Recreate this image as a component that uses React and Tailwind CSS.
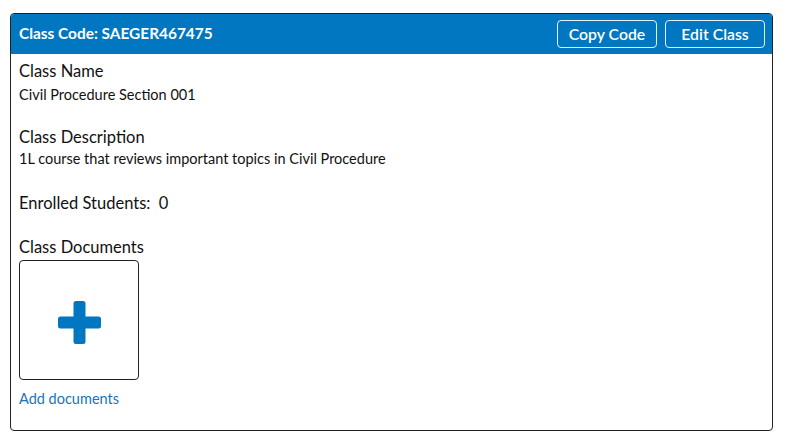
import React from "react";

const PlusIcon = () => (
  <svg width="43" height="43" viewBox="0 0 43 43" className="mt-[5px]">
    <rect x="15.5" y="0" width="12" height="43" rx="2.5" fill="#0077c0" />
    <rect x="0" y="15.5" width="43" height="12" rx="2.5" fill="#0077c0" />
  </svg>
);

const App = () => {
  return (
    <div className="w-[788px] h-[442px] bg-white pt-[13px] pl-[10px]" style={{ fontFamily: "Lato, 'Open Sans', sans-serif" }}>
      <div className="w-[763px] h-[418px] border border-[#222] rounded-[4px] overflow-hidden flex flex-col">
        <div className="h-[40px] bg-[#0077c0] flex items-center justify-between pl-[8px] pr-[7px]">
          <span className="text-white font-bold text-[15.4px]">Class Code: SAEGER467475</span>
          <div className="flex gap-[8px]">
            <button className="w-[100px] h-[28px] border border-[#e6f0f8] rounded-[4px] text-white font-semibold text-[15.8px]">
              Copy Code
            </button>
            <button className="w-[100px] h-[28px] border border-[#e6f0f8] rounded-[4px] text-white font-semibold text-[15.8px]">
              Edit Class
            </button>
          </div>
        </div>
        <div className="pl-[8px] pt-[6px] text-[#111]">
          <div className="text-[16.5px] leading-[22px]">Class Name</div>
          <div className="text-[14.5px] leading-[20px] mt-[3px]">Civil Procedure Section 001</div>
          <div className="text-[16.5px] leading-[22px] mt-[21px]">Class Description</div>
          <div className="text-[14.5px] leading-[20px] mt-[1px]">1L course that reviews important topics in Civil Procedure</div>
          <div className="text-[16.5px] leading-[22px] mt-[23px]">Enrolled Students:&nbsp; 0</div>
          <div className="text-[16.5px] leading-[22px] mt-[22px]">Class Documents</div>
          <div className="w-[120px] h-[120px] mt-[2px] border border-[#222] rounded-[4px] flex items-center justify-center">
            <PlusIcon />
          </div>
          <a className="block text-[14.5px] leading-[20px] mt-[9px] text-[#1a73b8]">Add documents</a>
        </div>
      </div>
    </div>
  );
};

export default App;
